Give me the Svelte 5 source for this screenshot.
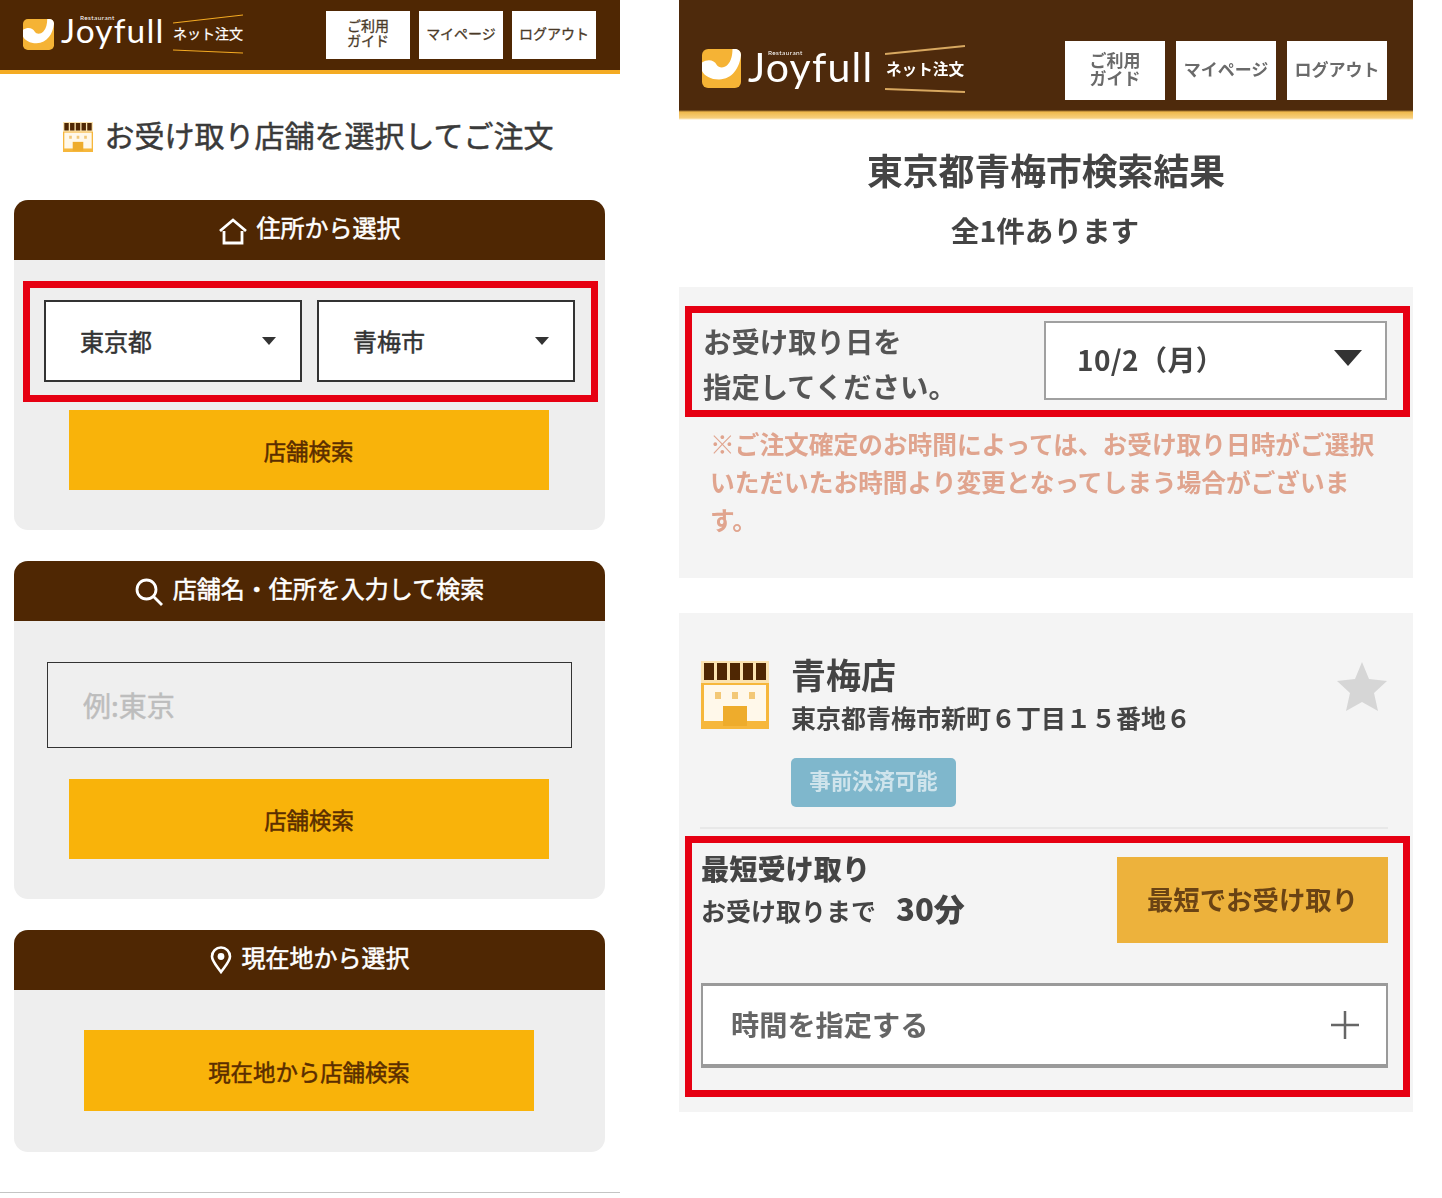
<script>
  const cards = [
    { title: "店舗名・住所を入力して検索", icon: "search" },
  ];
</script>

{#snippet logo()}
  <div class="logo">
    <svg class="logo-mark" viewBox="0 0 32 32">
      <rect width="32" height="32" rx="5" fill="#f5b335" />
      <path d="M0 11C5 8 10 9 12 13C14 16 18 16 21 13C24 10 25 5 25 0H27C30 0 32 2 32 5C31 15 25 25 14 25C7 25 2 22 0 18Z" fill="#fff" />
    </svg>
    <span class="logo-name"><small>Restaurant</small>Joyfull</span>
    <div class="logo-tag">
      <svg viewBox="0 0 70 10" preserveAspectRatio="none"><path d="M0 9L70 1" /></svg>
      <span>ネット注文</span>
      <svg viewBox="0 0 70 10" preserveAspectRatio="none"><path d="M0 4L70 7" /></svg>
    </div>
  </div>
{/snippet}

{#snippet store(cls)}
  <svg class={cls} viewBox="0 0 68 68">
    <rect x="0" y="0" width="68" height="68" fill="#f6b73c" />
    <rect x="3" y="24" width="62" height="36" fill="#fff8ea" />
    <rect x="0" y="0" width="68" height="22" fill="#fbe3b0" />
    <path d="M3 2h10v17H3zM16 2h10v17H16zM29 2h10v17H29zM42 2h10v17H42zM55 2h10v17H55z" fill="#4f2703" />
    <path d="M14 31h6v7h-6zM31 31h6v7h-6zM48 31h6v7h-6z" fill="#f3c877" />
    <rect x="22" y="45" width="24" height="20" fill="#eeac2c" />
  </svg>
{/snippet}

{#snippet caret(cls)}
  <svg class={cls} viewBox="0 0 14 8"><path d="M0 0H14L7 8Z" /></svg>
{/snippet}

<div class="page">
  <section class="left">
    <header class="bar">
      {@render logo()}
      <nav class="nav">
        <span>ご利用<br />ガイド</span>
        <span>マイページ</span>
        <span>ログアウト</span>
      </nav>
    </header>

    <h1 class="pick-title">
      {@render store("store-small")}
      <span>お受け取り店舗を選択してご注文</span>
    </h1>

    <div class="card">
      <h2 class="card-head">
        <svg class="ico" viewBox="0 0 28 28" fill="none" stroke="#fff" stroke-width="2.8">
          <path d="M1 14L14 3L27 14" />
          <path d="M5 14V26H23V14" />
        </svg>
        <span>住所から選択</span>
      </h2>
      <div class="card-body first">
        <div class="mark pref">
          <div class="select"><span>東京都</span> {@render caret("caret")}</div>
          <div class="select"><span>青梅市</span> {@render caret("caret")}</div>
        </div>
        <button class="go tight">店舗検索</button>
      </div>
    </div>

    <div class="card">
      <h2 class="card-head">
        <svg class="ico" viewBox="0 0 28 28" fill="none" stroke="#fff" stroke-width="2.8">
          <circle cx="11.5" cy="11.5" r="9.5" />
          <path d="M18.5 18.5L27 27" />
        </svg>
        <span>{cards[0].title}</span>
      </h2>
      <div class="card-body">
        <input class="query" placeholder="例:東京" />
        <button class="go">店舗検索</button>
      </div>
    </div>

    <div class="card">
      <h2 class="card-head">
        <svg class="ico pin" viewBox="0 0 22 28" fill="none" stroke="#fff" stroke-width="2.6">
          <path d="M11 26C6 19 2 15 2 10.5A9 9 0 0 1 20 10.5C20 15 16 19 11 26Z" />
          <circle cx="11" cy="10.5" r="3.4" fill="#fff" stroke="none" />
        </svg>
        <span>現在地から選択</span>
      </h2>
      <div class="card-body">
        <button class="go near">現在地から店舗検索</button>
      </div>
    </div>
  </section>

  <section class="right">
    <header class="bar2">
      <div class="soft bar2-in">
        {@render logo()}
        <nav class="nav nav2">
          <span>ご利用<br />ガイド</span>
          <span>マイページ</span>
          <span>ログアウト</span>
        </nav>
      </div>
    </header>

    <h1 class="result soft">東京都青梅市検索結果</h1>
    <p class="count soft">全1件あります</p>

    <div class="panel date-panel">
      <div class="mark date-mark">
        <p class="date-label soft">お受け取り日を<br />指定してください。</p>
        <div class="date-select soft"><span>10/2（月）</span> {@render caret("caret2")}</div>
      </div>
      <p class="note soft">
        ※ご注文確定のお時間によっては、お受け取り日時がご選択<br />
        いただいたお時間より変更となってしまう場合がございま<br />
        す。
      </p>
    </div>

    <div class="panel shop-panel">
      <div class="shop soft">
        {@render store("store-big")}
        <div class="shop-text">
          <h3>青梅店</h3>
          <p>東京都青梅市新町６丁目１５番地６</p>
          <span class="badge">事前決済可能</span>
        </div>
        <svg class="star" viewBox="0 0 52 52"><path d="M26 1L33 18L51 20L38 32L42 50L26 41L10 50L14 32L1 20L19 18Z" /></svg>
      </div>
      <div class="rule"></div>
      <div class="mark time-mark">
        <div class="soon">
          <div class="soon-text soft">
            <strong>最短受け取り</strong>
            <span>お受け取りまで<b>30分</b></span>
          </div>
          <button class="soon-btn soft"><span>最短でお受け取り</span></button>
        </div>
        <div class="pick-time soft">
          <span>時間を指定する</span>
          <svg class="plus" viewBox="0 0 28 28"><path d="M14 0V28M0 14H28" /></svg>
        </div>
      </div>
    </div>
  </section>
</div>

<style>
  :global(body) {
    background: #fff;
  }

  .page {
    display: flex;
    gap: 59px;
    width: 1442px;
    height: 1198px;
    overflow: hidden;
    font-family: "Noto Sans CJK JP", "Noto Sans", sans-serif;
    color: #333;
  }

  h1, h2, h3, p {
    margin: 0;
    font-weight: 400;
  }

  button {
    font-family: inherit;
    border: 0;
    cursor: pointer;
  }

  .left {
    width: 620px;
    height: 1193px;
    border-bottom: 1px solid #c4c4c4;
    box-sizing: border-box;
    -webkit-text-stroke: 0.5px currentColor;
  }

  .bar {
    height: 74px;
    box-sizing: border-box;
    background: #4f2703;
    border-bottom: 4px solid #f4ab23;
    display: flex;
    justify-content: space-between;
    padding: 11px 24px 0 23px;
  }

  .logo {
    display: flex;
    align-items: center;
    height: 44px;
    font-size: 33.4px;
    color: #fff;
    -webkit-text-stroke: 0;
  }

  .logo-mark {
    width: 31px;
    height: 31px;
    margin-right: 7px;
    margin-top: 2px;
  }

  .logo-name {
    position: relative;
    font-family: "Lato", sans-serif;
    font-weight: 400;
    letter-spacing: 1.2px;
    line-height: 1;
    width: 112px;
    margin-top: -4px;
  }

  .logo-name small {
    position: absolute;
    left: 19px;
    top: 0;
    font-size: 6.5px;
    line-height: 7px;
    letter-spacing: 0.4px;
  }

  .logo-tag {
    width: 70px;
    align-self: flex-start;
    margin-top: 3px;
    display: flex;
    flex-direction: column;
    align-items: center;
    font-size: 14px;
    line-height: 22px;
    font-weight: 400;
    -webkit-text-stroke: 0.25px currentColor;
  }

  .logo-tag span {
    margin-top: -2px;
    margin-bottom: 2px;
  }

  .logo-tag svg {
    width: 70px;
    height: 10px;
    fill: none;
    stroke: #f4ab23;
    stroke-width: 1.2;
  }

  .nav {
    display: flex;
    gap: 9px;
  }

  .nav span {
    width: 84px;
    height: 48px;
    box-sizing: border-box;
    padding-bottom: 4px;
    background: #fff;
    color: #4a3a28;
    display: flex;
    align-items: center;
    justify-content: center;
    text-align: center;
    font-size: 14px;
    line-height: 15px;
    -webkit-text-stroke: 0.3px currentColor;
  }

  .pick-title {
    height: 126px;
    display: flex;
    align-items: center;
    justify-content: center;
    gap: 11px;
    font-size: 30px;
    color: #3a3a3a;
    padding-right: 3px;
    box-sizing: border-box;
  }

  .pick-title span {
    margin-top: -6px;
  }

  .store-small {
    width: 30px;
    height: 30px;
    flex: none;
    margin-top: -1px;
  }

  .card {
    margin: 0 15px 31px 14px;
    border-radius: 14px;
    overflow: hidden;
    background: #eeeeee;
  }

  .card-head {
    height: 60px;
    background: #4f2703;
    color: #fff;
    display: flex;
    align-items: center;
    justify-content: center;
    gap: 10px;
    font-size: 24px;
    box-sizing: border-box;
  }

  .card-head span {
    margin-top: -7px;
  }

  .ico {
    width: 28px;
    height: 28px;
    margin-top: 2px;
  }

  .pin {
    width: 22px;
    margin-top: 0;
  }

  .card-body {
    padding: 41px 0 40px;
    display: flex;
    flex-direction: column;
    align-items: center;
  }

  .card-body.first {
    padding-top: 21px;
    align-items: stretch;
  }

  .mark {
    border: 7px solid #e60012;
    box-sizing: border-box;
  }

  .pref {
    height: 121px;
    margin: 0 7px 0 9px;
    padding: 12px 16px 0 14px;
    display: flex;
    gap: 15px;
  }

  .select {
    flex: 1;
    height: 82px;
    box-sizing: border-box;
    background: #fff;
    border: 2px solid #333;
    display: flex;
    align-items: center;
    justify-content: space-between;
    padding: 0 24px 0 34px;
    font-size: 24px;
  }

  .select span {
    margin-top: -2px;
  }

  .caret {
    width: 14px;
    height: 8px;
    fill: #333;
    margin-top: -1px;
  }

  .go {
    width: 480px;
    height: 80px;
    margin-right: 1px;
    background: #f9b30a;
    color: #5a2d00;
    font-size: 22.4px;
    margin-top: 31px;
    -webkit-text-stroke: 0.5px currentColor;
  }

  .go.tight {
    margin: 8px auto 0;
    transform: translateX(-1px);
  }

  .go.near {
    width: 450px;
    height: 81px;
    margin-top: -1px;
    margin-bottom: 1px;
  }

  .query {
    width: 525px;
    height: 86px;
    box-sizing: border-box;
    background: #efefef;
    border: 1.5px solid #333;
    padding: 0 35px;
    font-family: inherit;
    font-size: 28px;
    outline: none;
  }

  .query::placeholder {
    color: #bdbdbd;
  }

  .right {
    width: 734px;
  }

  .bar2 {
    height: 120px;
    background: linear-gradient(#4e2a0c 0, #4e2a0c 110px, #efb94c 112px, #f7cf7c 118px, #fff 120px);
  }

  .bar2-in {
    display: flex;
    justify-content: space-between;
    padding: 41px 26px 0 23px;
  }

  .bar2 .logo {
    height: 55px;
    font-size: 41px;
  }

  .bar2 .logo-mark {
    width: 39px;
    height: 39px;
    margin-top: 0;
  }

  .bar2 .logo-name {
    width: 137px;
    margin-top: -4px;
  }

  .bar2 .logo-name small {
    left: 20px;
    top: 3px;
    font-size: 6.5px;
  }

  .bar2 .logo-tag {
    width: 80px;
    margin-top: 4px;
    font-size: 15.6px;
    line-height: 26px;
    font-weight: 700;
    -webkit-text-stroke: 0;
  }

  .bar2 .logo-tag span {
    margin-top: 0;
    margin-bottom: 4px;
  }

  .bar2 .logo-tag svg {
    width: 80px;
    stroke: #d8a860;
    stroke-width: 2;
  }

  .nav2 {
    gap: 11px;
  }

  .nav.nav2 span {
    width: 100px;
    height: 59px;
    font-size: 17px;
    line-height: 18px;
    color: #6a6a6a;
    font-weight: 700;
    -webkit-text-stroke: 0;
  }

  .soft {
    filter: blur(0.7px);
  }

  .result {
    margin-top: 24px;
    text-align: center;
    font-size: 35.8px;
    line-height: 50px;
    font-weight: 700;
    color: #444;
  }

  .count {
    margin-top: 16px;
    text-align: center;
    font-size: 28.6px;
    line-height: 40px;
    font-weight: 700;
    color: #444;
    transform: translateX(-1px);
  }

  .panel {
    background: #f4f4f4;
  }

  .date-panel {
    margin-top: 37px;
    height: 291px;
    padding-top: 19px;
    box-sizing: border-box;
  }

  .date-mark {
    height: 111px;
    margin: 0 3px 0 6px;
    padding: 0 16px 2px 11px;
    display: flex;
    align-items: center;
    justify-content: space-between;
  }

  .date-label {
    font-size: 28.4px;
    line-height: 45px;
    font-weight: 700;
    color: #555;
    margin-top: 4px;
  }

  .date-select {
    width: 343px;
    height: 79px;
    box-sizing: border-box;
    background: #fff;
    border: 2.5px solid #a0a0a0;
    display: flex;
    align-items: center;
    justify-content: space-between;
    padding: 0 22px 0 31px;
    font-size: 28px;
    font-weight: 700;
    color: #444;
    letter-spacing: 0.4px;
  }

  .date-select span {
    margin-top: -4px;
  }

  .caret2 {
    width: 30px;
    height: 16px;
    fill: #333;
    margin-top: -6px;
  }

  .note {
    margin-top: 7px;
    padding-left: 31px;
    font-size: 24.7px;
    line-height: 38px;
    white-space: nowrap;
    color: #e0a48e;
    font-weight: 700;
  }

  .shop-panel {
    margin-top: 35px;
    height: 499px;
    box-sizing: border-box;
    padding-top: 48px;
  }

  .shop {
    display: flex;
    padding: 0 25px 0 22px;
  }

  .store-big {
    width: 68px;
    height: 68px;
    flex: none;
    margin: 0 22px 0 0;
  }

  .shop-text {
    flex: 1;
  }

  .shop-text h3 {
    font-size: 35px;
    line-height: 36px;
    color: #444;
    font-weight: 700;
    margin-top: -5px;
  }

  .shop-text p {
    margin-top: 7px;
    font-size: 25px;
    line-height: 36px;
    font-weight: 700;
    color: #444;
  }

  .badge {
    display: block;
    width: 165px;
    height: 49px;
    margin-top: 23px;
    border-radius: 5px;
    background: #7fb7cc;
    color: #cfe4ec;
    text-align: center;
    font-size: 21.4px;
    line-height: 44px;
    font-weight: 700;
  }

  .star {
    width: 52px;
    height: 52px;
    fill: #d6d6d6;
  }

  .rule {
    height: 2px;
    margin: 20px 25px 7px 21px;
    background: #e8e8e8;
  }

  .time-mark {
    height: 261px;
    margin: 0 3px 0 6px;
    padding: 14px 15px 0 9px;
  }

  .soon {
    display: flex;
    justify-content: space-between;
    height: 86px;
  }

  .soon-text {
    display: flex;
    flex-direction: column;
    font-weight: 700;
    color: #444;
  }

  .soon-text strong {
    font-size: 28.2px;
    line-height: 40px;
    margin-top: -9px;
  }

  .soon-text span {
    font-size: 25px;
    line-height: 40px;
  }

  .soon-text b {
    margin-left: 20px;
    font-size: 31px;
  }

  .soon-btn {
    width: 271px;
    height: 86px;
    background: #edb23c;
    color: #6a4314;
    font-size: 26.4px;
    font-weight: 700;
  }

  .soon-btn span {
    display: block;
    margin-top: -3px;
  }

  .pick-time {
    height: 85px;
    margin-top: 40px;
    box-sizing: border-box;
    background: #fff;
    border: 2px solid #9a9a9a;
    border-top-width: 3px;
    border-bottom-width: 4px;
    display: flex;
    align-items: center;
    justify-content: space-between;
    padding: 0 27px 0 28px;
    font-size: 28.2px;
    font-weight: 700;
    color: #666;
  }

  .pick-time span {
    margin-top: -4px;
  }

  .plus {
    width: 28px;
    height: 28px;
    fill: none;
    stroke: #666;
    stroke-width: 2.5;
  }
</style>
